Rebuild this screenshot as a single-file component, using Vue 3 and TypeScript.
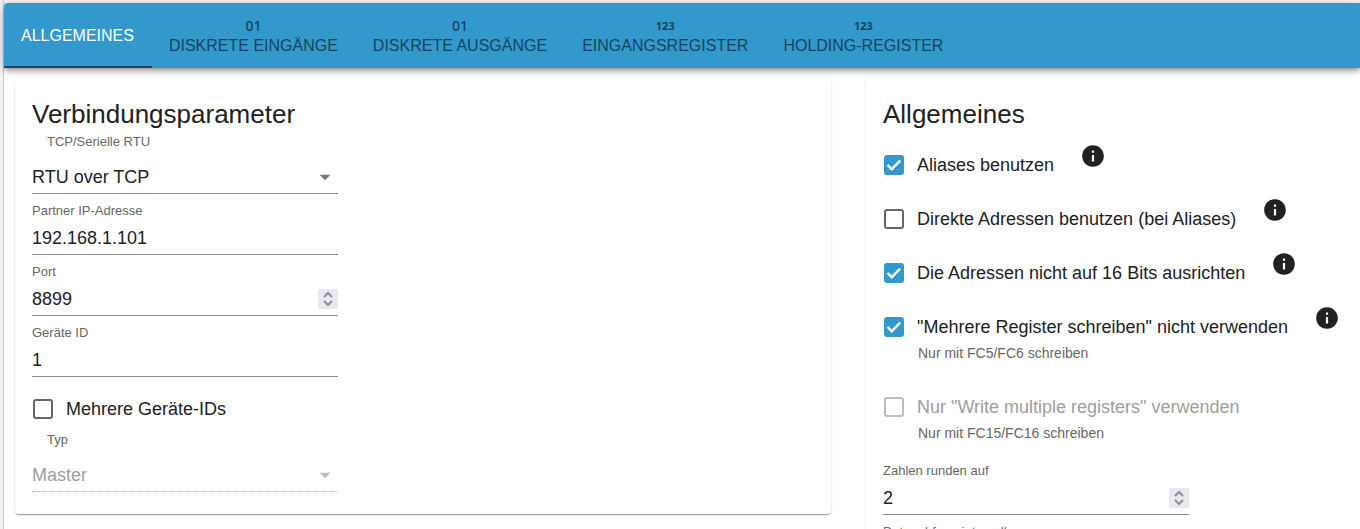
<script setup lang="ts">
import { ref } from 'vue'

interface Tab {
  label: string
  icon?: 'binary' | 'digits'
}

interface Option {
  id: string
  label: string
  help?: string
  info?: boolean
  disabled?: boolean
  checked: boolean
}

const tabs: Tab[] = [
  { label: 'ALLGEMEINES' },
  { label: 'DISKRETE EINGÄNGE', icon: 'binary' },
  { label: 'DISKRETE AUSGÄNGE', icon: 'binary' },
  { label: 'EINGANGSREGISTER', icon: 'digits' },
  { label: 'HOLDING-REGISTER', icon: 'digits' },
]
const activeTab = ref(0)

const mode = ref('RTU over TCP')
const address = ref('192.168.1.101')
const port = ref(8899)
const deviceId = ref(1)
const multipleIds = ref(false)
const role = ref('Master')
const rounding = ref(2)
const pollInterval = ref(1000)

const options = ref<Option[]>([
  { id: 'aliases', label: 'Aliases benutzen', info: true, checked: true },
  { id: 'direct', label: 'Direkte Adressen benutzen (bei Aliases)', info: true, checked: false },
  { id: 'align', label: 'Die Adressen nicht auf 16 Bits ausrichten', info: true, checked: true },
  { id: 'nomulti', label: '"Mehrere Register schreiben" nicht verwenden', help: 'Nur mit FC5/FC6 schreiben', info: true, checked: true },
  { id: 'onlymulti', label: 'Nur "Write multiple registers" verwenden', help: 'Nur mit FC15/FC16 schreiben', disabled: true, checked: false },
])
</script>

<template>
  <div class="page">
    <nav class="tabs" role="tablist">
      <button
        v-for="(tab, i) in tabs"
        :key="tab.label"
        class="tab"
        :class="{ active: i === activeTab }"
        type="button"
        role="tab"
        :aria-selected="i === activeTab"
        @click="activeTab = i"
      >
        <span v-if="tab.icon" class="tab-icon" :class="tab.icon">{{ tab.icon === 'binary' ? '01' : '123' }}</span>
        <span>{{ tab.label }}</span>
      </button>
    </nav>

    <main class="cards">
      <section class="card">
        <h2>Verbindungsparameter</h2>

        <div class="field select-field">
          <label for="mode">TCP/Serielle RTU</label>
          <div class="control">
            <select id="mode" v-model="mode">
              <option>RTU over TCP</option>
            </select>
            <svg class="arrow" viewBox="0 0 24 24" aria-hidden="true"><path d="M7 10l5 5 5-5z" /></svg>
          </div>
        </div>

        <div class="field">
          <label for="address">Partner IP-Adresse</label>
          <div class="control"><input id="address" v-model="address" type="text" /></div>
        </div>

        <div class="field">
          <label for="port">Port</label>
          <div class="control">
            <input id="port" v-model="port" type="number" />
            <span class="spinner" aria-hidden="true">
              <svg viewBox="0 0 20 20"><path d="M6 8l4-4 4 4M6 12l4 4 4-4" /></svg>
            </span>
          </div>
        </div>

        <div class="field">
          <label for="device">Geräte ID</label>
          <div class="control"><input id="device" v-model="deviceId" type="number" /></div>
        </div>

        <label class="check multi">
          <input v-model="multipleIds" type="checkbox" />
          <span>Mehrere Geräte-IDs</span>
        </label>

        <div class="field select-field disabled">
          <label for="role">Typ</label>
          <div class="control">
            <select id="role" v-model="role" disabled>
              <option>Master</option>
            </select>
            <svg class="arrow" viewBox="0 0 24 24" aria-hidden="true"><path d="M7 10l5 5 5-5z" /></svg>
          </div>
        </div>
      </section>

      <section class="card side">
        <h2>Allgemeines</h2>

        <div class="options">
          <div v-for="option in options" :key="option.id" class="option" :class="{ helped: option.help }">
            <div class="option-row">
              <label class="check" :class="{ off: option.disabled }">
                <input v-model="option.checked" type="checkbox" :disabled="option.disabled" />
                <span>{{ option.label }}</span>
              </label>
              <svg v-if="option.info" class="info" viewBox="0 0 24 24" role="img" aria-label="Info">
                <path d="M12 2C6.48 2 2 6.48 2 12s4.480 10 10 10 10-4.480 10-10S17.520 2 12 2zm1 15h-2v-6h2v6zm0-8h-2V7h2v2z" />
              </svg>
            </div>
            <p v-if="option.help" class="help">{{ option.help }}</p>
          </div>
        </div>

        <div class="field">
          <label for="rounding">Zahlen runden auf</label>
          <div class="control">
            <input id="rounding" v-model="rounding" type="number" />
            <span class="spinner" aria-hidden="true">
              <svg viewBox="0 0 20 20"><path d="M6 8l4-4 4 4M6 12l4 4 4-4" /></svg>
            </span>
          </div>
        </div>

        <div class="field">
          <label for="poll">Datenabfrageintervall</label>
          <div class="control"><input id="poll" v-model="pollInterval" type="number" /></div>
        </div>
      </section>
    </main>
  </div>
</template>

<style>
html,
body,
#app {
  height: 100%;
}

body {
  margin: 0;
  overflow: hidden;
  background: #f2f2f2;
}
</style>

<style scoped>
.page {
  box-sizing: border-box;
  height: 100%;
  margin-left: 3px;
  padding-top: 3px;
  border-left: 1px solid #c8c8c8;
  font-family: 'Liberation Sans', Arial, Helvetica, sans-serif;
  font-size: 18px;
  color: #212121;
  display: flex;
  flex-direction: column;
}

.tabs {
  position: relative;
  z-index: 1;
  flex: none;
  display: flex;
  height: 65px;
  background: #3399cc;
  border-top-left-radius: 4px;
  box-shadow: 0 2px 4px -1px rgba(0, 0, 0, 0.3), 0 4px 6px rgba(0, 0, 0, 0.18), 0 1px 11px rgba(0, 0, 0, 0.12);
}

.tab {
  display: flex;
  flex-direction: column;
  align-items: center;
  justify-content: center;
  padding: 0 18px 0 17px;
  border: 0;
  background: none;
  font: 16px/20px 'Liberation Sans', Arial, sans-serif;
  color: #15455c;
  white-space: nowrap;
  cursor: pointer;
}

.tab.active {
  color: #fff;
  box-shadow: inset 0 -2px #164477;
}

.tab-icon.binary {
  font-family: 'Noto Sans', sans-serif;
  font-size: 14px;
  font-weight: 500;
}

.tab-icon.digits {
  font-family: 'Noto Sans', sans-serif;
  font-size: 11px;
  font-weight: 700;
}

.cards {
  flex: 1;
  display: flex;
  align-items: flex-start;
  gap: 35px;
  padding: 11px 0 0 11px;
  background: #fff;
}

.card {
  position: relative;
  z-index: 2;
  box-sizing: border-box;
  flex: none;
  width: 60vw;
  padding: 18px 17px 22px;
  border-radius: 4px;
  background: #fff;
  box-shadow: 0 2px 1px -1px rgba(0, 0, 0, 0.2), 0 1px 1px rgba(0, 0, 0, 0.14), 0 1px 3px rgba(0, 0, 0, 0.12);
}

.card.side {
  flex: 1;
  width: auto;
  border-radius: 4px 0 0 4px;
}

h2 {
  margin: 0;
  font-size: 26px;
  font-weight: 400;
  line-height: 34px;
}

.field {
  width: 306px;
}

.field > label {
  display: block;
  padding-top: 8px;
  font-size: 13px;
  line-height: 18px;
  color: #666;
}

.control {
  box-sizing: border-box;
  display: flex;
  align-items: center;
  height: 35px;
  padding-top: 2px;
  border-bottom: 1px solid #8c8c8c;
}

.control input,
.control select {
  flex: 1;
  min-width: 0;
  height: 30px;
  margin: 0;
  padding: 0;
  border: 0;
  outline: 0;
  background: none;
  appearance: none;
  font: inherit;
  color: inherit;
  opacity: 1;
}

.control input[type='number'] {
  appearance: textfield;
}

.select-field > label {
  padding: 2px 0 0 15px;
}

.select-field .control {
  height: 43px;
  padding-top: 10px;
}

.arrow {
  width: 26px;
  height: 26px;
  fill: #757575;
}

.spinner {
  width: 20px;
  height: 20px;
  background: #e9e8ee;
}

.spinner svg {
  display: block;
  fill: none;
  stroke: #8f8f9d;
  stroke-width: 2;
}

.disabled .control {
  border-bottom: 1px dotted #aaa;
  color: #9e9e9e;
}

.disabled .arrow {
  fill: #bdbdbd;
}

.check {
  display: flex;
  align-items: center;
  gap: 13px;
  height: 24px;
  line-height: 24px;
  white-space: nowrap;
}

.check input {
  appearance: none;
  box-sizing: border-box;
  width: 20px;
  height: 20px;
  margin: 0 0 0 1px;
  border: 2px solid #666;
  border-radius: 3px;
  background: #fff;
}

.check input:checked {
  border-color: #3399cc;
  background: #3399cc url("data:image/svg+xml,%3Csvg xmlns='http://www.w3.org/2000/svg' viewBox='0 0 16 16'%3E%3Cpath d='M1.500 8l4.200 4.200 8.500-8.500' fill='none' stroke='white' stroke-width='2.400'/%3E%3C/svg%3E") center / 16px no-repeat;
}

.check.off {
  color: #9e9e9e;
}

.check.off input {
  border-color: #bdbdbd;
}

.multi {
  margin: 20px 0 8px;
}

.options {
  display: flex;
  flex-direction: column;
  gap: 18px;
  margin: 16px 0 3px;
}

.option.helped {
  margin-bottom: 10px;
}

.option-row {
  display: flex;
  align-items: center;
  gap: 26px;
  height: 36px;
}

.info {
  flex: none;
  width: 26px;
  height: 26px;
  margin-bottom: 18px;
  fill: #212121;
}

.help {
  margin: 0 0 0 35px;
  font-size: 14px;
  line-height: 16px;
  color: #666;
}
</style>
